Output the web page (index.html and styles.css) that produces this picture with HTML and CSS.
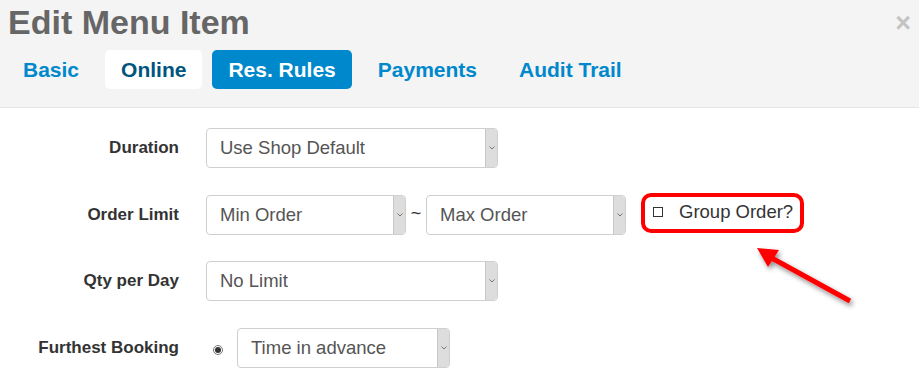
FILE: index.html
```html
<!DOCTYPE html>
<html>
<head>
<meta charset="utf-8">
<link rel="stylesheet" href="styles.css">
</head>
<body>
<div class="modal">
  <div class="header">
    <h1 class="title">Edit Menu Item</h1>
    <span class="close">×</span>
    <nav class="tabs">
      <a class="tab">Basic</a>
      <a class="tab tab-hover">Online</a>
      <a class="tab tab-active">Res. Rules</a>
      <a class="tab">Payments</a>
      <a class="tab">Audit Trail</a>
    </nav>
  </div>
  <div class="form">
    <div class="row">
      <label class="label">Duration</label>
      <div class="controls">
        <div class="select wide"><span class="sel-text">Use Shop Default</span><span class="sel-arrow"><svg width="6" height="4" viewBox="0 0 6 4"><path d="M0.5 0.5 L3 3 L5.5 0.5" fill="none" stroke="#777" stroke-width="1"/></svg></span></div>
      </div>
    </div>
    <div class="row">
      <label class="label">Order Limit</label>
      <div class="controls">
        <div class="select half"><span class="sel-text">Min Order</span><span class="sel-arrow"><svg width="6" height="4" viewBox="0 0 6 4"><path d="M0.5 0.5 L3 3 L5.5 0.5" fill="none" stroke="#777" stroke-width="1"/></svg></span></div>
        <span class="tilde">~</span>
        <div class="select half"><span class="sel-text">Max Order</span><span class="sel-arrow"><svg width="6" height="4" viewBox="0 0 6 4"><path d="M0.5 0.5 L3 3 L5.5 0.5" fill="none" stroke="#777" stroke-width="1"/></svg></span></div>
        <div class="group-box"><span class="checkbox"></span><span class="group-text">Group Order?</span></div>
      </div>
    </div>
    <div class="row">
      <label class="label">Qty per Day</label>
      <div class="controls">
        <div class="select wide"><span class="sel-text">No Limit</span><span class="sel-arrow"><svg width="6" height="4" viewBox="0 0 6 4"><path d="M0.5 0.5 L3 3 L5.5 0.5" fill="none" stroke="#777" stroke-width="1"/></svg></span></div>
      </div>
    </div>
    <div class="row">
      <label class="label">Furthest Booking</label>
      <div class="controls">
        <span class="radio"><span class="radio-dot"></span></span>
        <div class="select mid"><span class="sel-text">Time in advance</span><span class="sel-arrow"><svg width="6" height="4" viewBox="0 0 6 4"><path d="M0.5 0.5 L3 3 L5.5 0.5" fill="none" stroke="#777" stroke-width="1"/></svg></span></div>
      </div>
    </div>
  </div>
  <svg class="pointer" width="130" height="80" viewBox="0 0 130 80">
    <defs>
      <filter id="sh" x="-30%" y="-30%" width="160%" height="160%">
        <feGaussianBlur in="SourceAlpha" stdDeviation="2.5"/>
        <feOffset dx="2" dy="3" result="b"/>
        <feFlood flood-color="#000" flood-opacity="0.45"/>
        <feComposite in2="b" operator="in"/>
        <feMerge><feMergeNode/><feMergeNode in="SourceGraphic"/></feMerge>
      </filter>
    </defs>
    <g filter="url(#sh)">
      <line x1="110" y1="65" x2="28" y2="20" stroke="#ff0000" stroke-width="5" stroke-linecap="butt"/>
      <polygon points="17,12 39,14 28,31" fill="#ff0000"/>
    </g>
  </svg>
</div>
</body>
</html>
```

FILE: styles.css
```css
* { box-sizing: border-box; }
html, body { margin: 0; padding: 0; background: #fff; }
body { font-family: "Liberation Sans", Arial, sans-serif; width: 919px; height: 379px; overflow: hidden; }

.modal { position: relative; width: 919px; height: 379px; }

.header {
  position: relative;
  background: #f4f4f4;
  height: 108px;
  border-bottom: 1px solid #e5e5e5;
  padding: 0 0 0 7px;
}
.title {
  margin: 0;
  padding-left: 1px;
  font-size: 34px;
  font-weight: bold;
  color: #666;
  line-height: 44px;
  height: 44px;
}
.close {
  position: absolute;
  right: 8px;
  top: 8px;
  font-size: 27px;
  font-weight: bold;
  color: #c4c4c4;
  line-height: 30px;
}
.tabs {
  display: flex;
  gap: 10px;
  margin-top: 6px;
}
.tab {
  display: block;
  height: 39px;
  line-height: 39px;
  padding: 0 16px;
  font-size: 21px;
  font-weight: bold;
  color: #0088cc;
  border-radius: 5px;
}
.tab-hover { background: #fff; color: #005580; }
.tab-active { background: #0088cc; color: #fff; }

.form {
  padding-top: 20px;
  display: flex;
  flex-direction: column;
  gap: 26.5px;
}
.row {
  display: flex;
  align-items: center;
  height: 40px;
}
.label {
  flex: 0 0 180px;
  text-align: right;
  font-size: 17px;
  font-weight: bold;
  color: #333;
  padding-right: 1px;
}
.controls {
  display: flex;
  align-items: center;
  margin-left: 26px;
  flex-shrink: 0;
}
.select {
  display: flex;
  flex-shrink: 0;
  height: 40px;
  border: 1px solid #cfcfcf;
  border-radius: 4px;
  background: #fff;
  overflow: hidden;
}
.wide { width: 292px; }
.half { width: 200px; }
.mid { width: 213px; }
.sel-text {
  flex: 1;
  padding-left: 13px;
  line-height: 38px;
  font-size: 18.5px;
  color: #555;
}
.sel-arrow {
  flex: 0 0 12px;
  background: #dddddd;
  border-left: 1px solid #c8c8c8;
  display: flex;
  align-items: center;
  justify-content: center;
}
.tilde {
  flex: 0 0 20px;
  text-align: center;
  font-size: 18px;
  color: #333;
  margin-top: -2px;
}
.group-box {
  flex: 0 0 163px;
  margin-left: 15px;
  margin-top: -4px;
  height: 40px;
  border: 4px solid #ff0000;
  border-radius: 10px;
  display: flex;
  align-items: center;
  padding-left: 8px;
}
.checkbox {
  flex: 0 0 10px;
  height: 10px;
  border: 1px solid #333;
  margin-top: -2px;
}
.group-text {
  margin-left: 16px;
  font-size: 18.5px;
  color: #333;
  white-space: nowrap;
  margin-top: -2px;
}
.radio {
  flex: 0 0 10px;
  height: 10px;
  border: 1px solid #777;
  border-radius: 50%;
  display: flex;
  align-items: center;
  justify-content: center;
  margin-left: 7px;
  margin-right: 14px;
  margin-top: 4px;
}
.radio-dot {
  width: 6px;
  height: 6px;
  background: #333;
  border-radius: 50%;
}
.pointer {
  position: absolute;
  left: 740px;
  top: 236px;
}
```
